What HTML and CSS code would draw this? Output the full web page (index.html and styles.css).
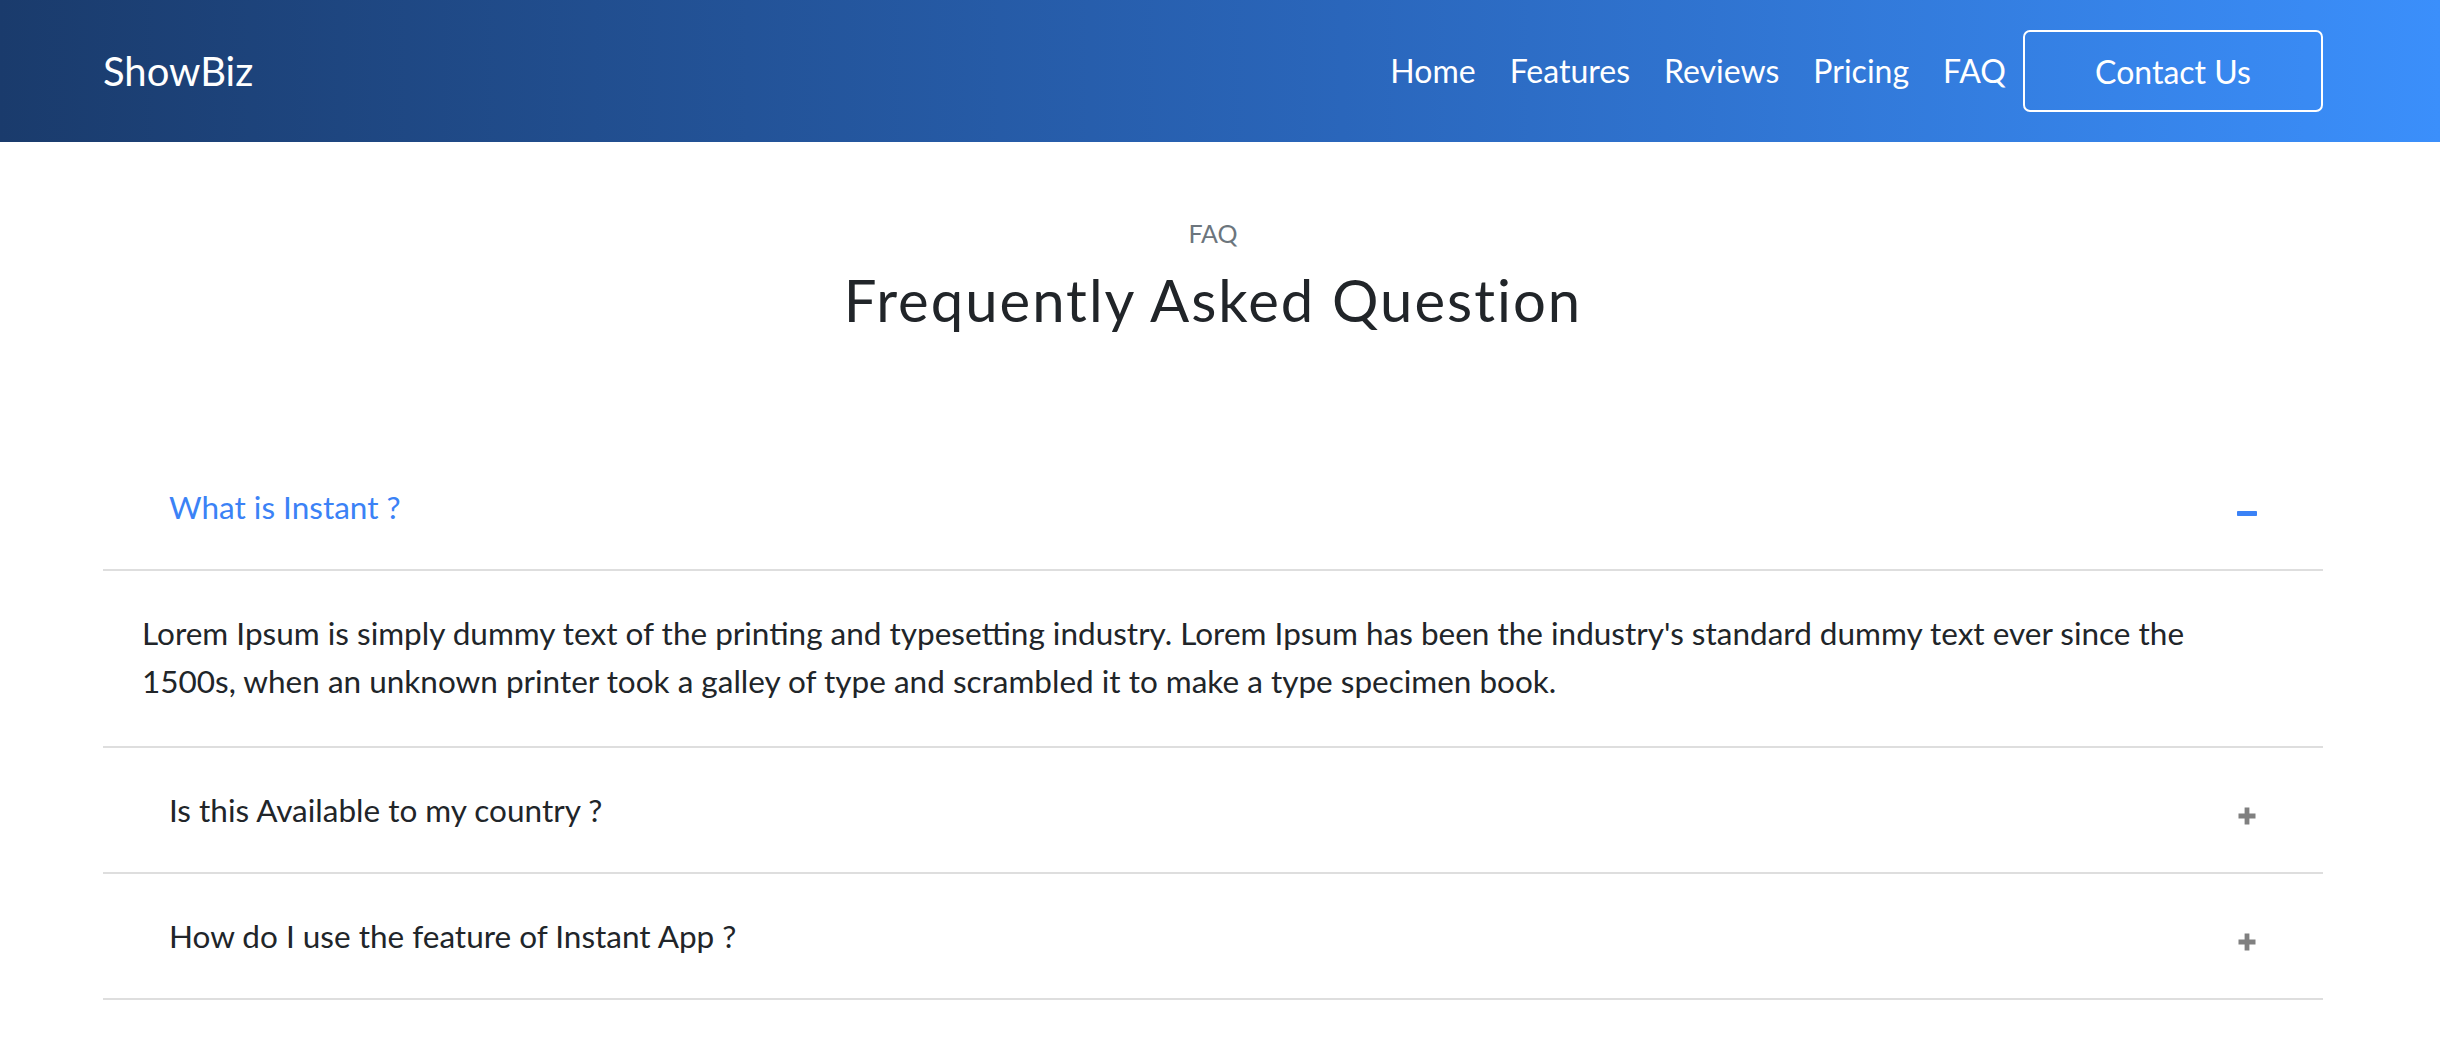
FILE: index.html
```html
<!DOCTYPE html>
<html lang="en">
<head>
<meta charset="utf-8">
<title>ShowBiz - FAQ</title>
<link rel="stylesheet" href="styles.css">
</head>
<body>
<header class="site-header">
  <div class="container header-inner">
    <a class="brand" href="#">ShowBiz</a>
    <nav class="nav">
      <a class="nav-link" href="#">Home</a>
      <a class="nav-link" href="#">Features</a>
      <a class="nav-link" href="#">Reviews</a>
      <a class="nav-link" href="#">Pricing</a>
      <a class="nav-link" href="#">FAQ</a>
      <a class="btn-contact" href="#">Contact Us</a>
    </nav>
  </div>
</header>
<main class="container faq">
  <div class="faq-label">FAQ</div>
  <h1 class="faq-title">Frequently Asked Question</h1>
  <div class="accordion">
    <div class="acc-item open">
      <div class="acc-head">
        <span class="acc-q">What is Instant ?</span>
        <svg class="acc-icon" width="20" height="20" viewBox="0 0 20 20"><rect x="0" y="8" width="20" height="5" rx="0.8" fill="#3b82f6"/></svg>
      </div>
      <div class="acc-body">Lorem Ipsum is simply dummy text of the printing and typesetting industry. Lorem Ipsum has been the industry's standard dummy text ever since the 1500s, when an unknown printer took a galley of type and scrambled it to make a type specimen book.</div>
    </div>
    <div class="acc-item">
      <div class="acc-head">
        <span class="acc-q">Is this Available to my country ?</span>
        <svg class="acc-icon" width="20" height="20" viewBox="0 0 20 20"><path d="M7.6 1.5h4.8v6.1h6.1v4.8h-6.1v6.1H7.6v-6.1H1.5V7.6h6.1z" fill="#808080"/></svg>
      </div>
    </div>
    <div class="acc-item">
      <div class="acc-head">
        <span class="acc-q">How do I use the feature of Instant App ?</span>
        <svg class="acc-icon" width="20" height="20" viewBox="0 0 20 20"><path d="M7.6 1.5h4.8v6.1h6.1v4.8h-6.1v6.1H7.6v-6.1H1.5V7.6h6.1z" fill="#808080"/></svg>
      </div>
    </div>
  </div>
</main>
</body>
</html>
```

FILE: styles.css
```css
* { box-sizing: border-box; }
html, body { margin: 0; padding: 0; }
body {
  font-family: Lato, "Open Sans", sans-serif;
  color: #212529;
  background: #fff;
}
a { text-decoration: none; color: inherit; }

.container {
  width: 2220px;
  margin-left: 103px;
}

.site-header {
  height: 142px;
  background: linear-gradient(90deg, #1a3b6c 0%, #2a66bb 55%, #3b8ffb 100%);
}
.header-inner {
  height: 142px;
  display: flex;
  align-items: center;
  justify-content: space-between;
}
.brand {
  color: #fff;
  font-size: 40px;
  line-height: 1.2;
}
.nav {
  display: flex;
  align-items: center;
}
.nav-link {
  color: #fff;
  font-size: 32px;
  line-height: 1.2;
  padding: 0 17px;
}
.btn-contact {
  width: 300px;
  height: 82px;
  border: 2px solid #fff;
  border-radius: 7px;
  color: #fff;
  font-size: 32px;
  display: flex;
  align-items: center;
  justify-content: center;
}

.faq { padding-top: 76px; }
.faq-label {
  text-align: center;
  font-size: 25px;
  line-height: 1.2;
  color: #6c757d;
}
.faq-title {
  margin: 17px 0 0;
  text-align: center;
  font-weight: 400;
  font-size: 58px;
  line-height: 1.2;
  letter-spacing: 2px;
  color: #212529;
}
.accordion { margin-top: 110px; }
.acc-head {
  height: 126px;
  display: flex;
  align-items: center;
  justify-content: space-between;
  padding: 0 66px;
  border-bottom: 2px solid #dedede;
}
.acc-q {
  font-size: 31.5px;
  line-height: 1.2;
  color: #212529;
  padding-top: 2px;
}
.open .acc-q { color: #3b82f6; }
.acc-icon { margin-top: 12px; }
.acc-body {
  font-size: 31.5px;
  line-height: 48px;
  padding: 38px 60px 41px 39px;
  border-bottom: 2px solid #dedede;
}
```
